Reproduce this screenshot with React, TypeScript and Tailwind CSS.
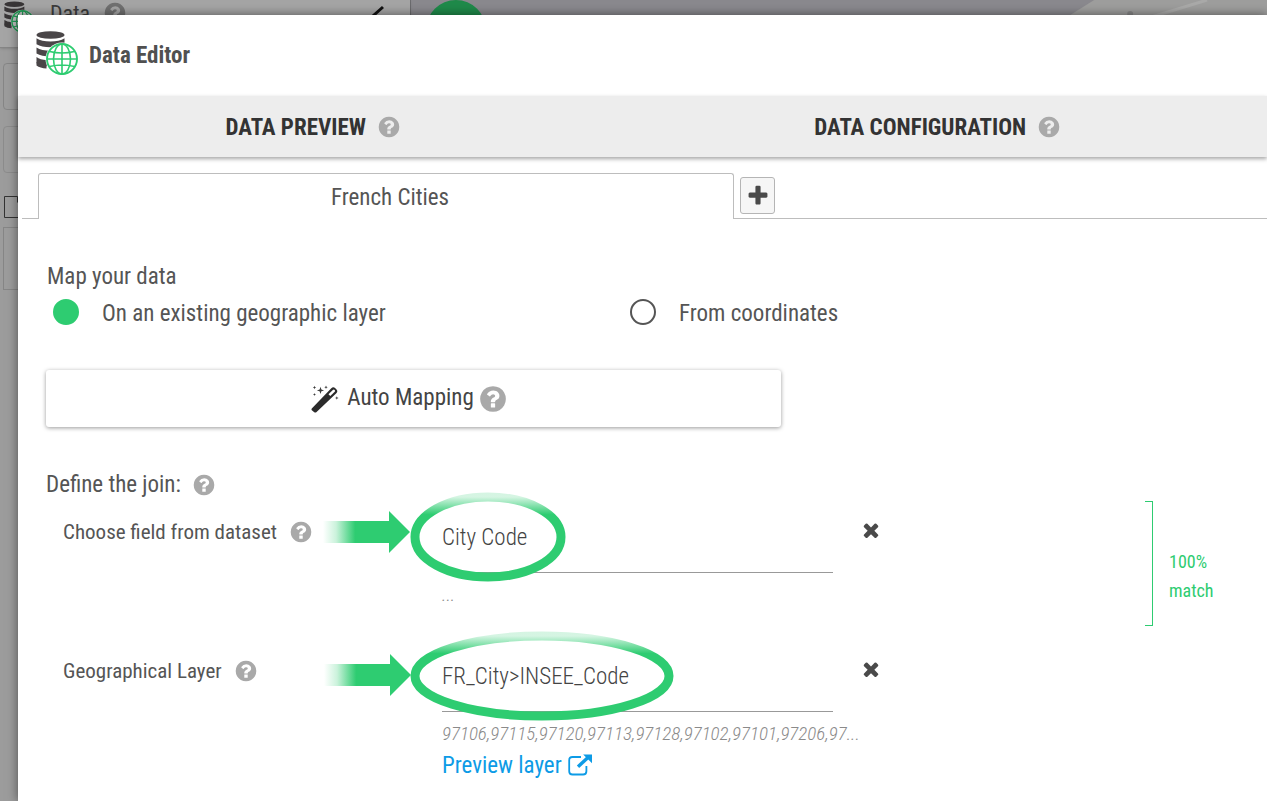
import { useId, useState } from "react";

type IconProps = { className?: string };

function HelpIcon({ className = "size-[24px]" }: IconProps) {
  return (
    <svg viewBox="0 0 1792 1792" fill="currentColor" className={className} aria-hidden="true">
      <path d="M1024 1376v-192q0-14-9-23t-23-9h-192q-14 0-23 9t-9 23v192q0 14 9 23t23 9h192q14 0 23-9t9-23zm256-672q0-88-55.5-163t-138.5-116-170-41q-243 0-371 213-15 24 8 42l132 100q7 6 19 6 16 0 25-12 53-68 86-92 34-24 86-24 48 0 85.5 26t37.5 59q0 38-20 61t-68 45q-63 28-115.5 86.5t-52.5 125.5v36q0 14 9 23t23 9h192q14 0 23-9t9-23q0-19 21.5-49.5t54.5-49.5q32-18 49-28.5t46-35 44.5-48 28-60.5 12.5-81zm384 192q0 209-103 385.5t-279.5 279.5-385.5 103-385.5-103-279.5-279.5-103-385.5 103-385.5 279.5-279.5 385.5-103 385.5 103 279.5 279.5 103 385.5z" />
    </svg>
  );
}

function PlusIcon({ className }: IconProps) {
  return (
    <svg viewBox="0 0 1792 1792" fill="currentColor" className={className} aria-hidden="true">
      <path d="M1600 736v192q0 40-28 68t-68 28h-416v416q0 40-28 68t-68 28h-192q-40 0-68-28t-28-68v-416h-416q-40 0-68-28t-28-68v-192q0-40 28-68t68-28h416v-416q0-40 28-68t68-28h192q40 0 68 28t28 68v416h416q40 0 68 28t28 68z" />
    </svg>
  );
}

function TimesIcon({ className }: IconProps) {
  return (
    <svg viewBox="0 0 1792 1792" fill="currentColor" className={className} aria-hidden="true">
      <path d="M1490 1322q0 40-28 68l-136 136q-28 28-68 28t-68-28l-294-294-294 294q-28 28-68 28t-68-28l-136-136q-28-28-28-68t28-68l294-294-294-294q-28-28-28-68t28-68l136-136q28-28 68-28t68 28l294 294 294-294q28-28 68-28t68 28l136 136q28 28 28 68t-28 68l-294 294 294 294q28 28 28 68z" />
    </svg>
  );
}

function DatabaseGlobe({ className }: IconProps) {
  return (
    <svg viewBox="0 0 42 45" className={className} aria-hidden="true">
      <g fill="#4a4648">
        <ellipse cx="14.5" cy="4" rx="14" ry="3.8" />
        <path d="M0.5 7.2q5 3.2 14 3.2t14-3.2v6q-5 3-14 3t-14-3z" />
        <path d="M0.5 16.6q5 3.2 14 3.2t14-3.2v6q-5 3-14 3t-14-3z" />
        <path d="M0.5 26q3.5 2.8 10.5 3.2v6q-7-.4-10.5-3z" />
        <path d="M0.5 31q3.5 2.8 10 3.2v3.4q-6.500-.4-10-3z" />
      </g>
      <circle cx="26" cy="28" r="16.500" fill="#fff" />
      <g fill="none" stroke="#2ecc71" strokeWidth="1.6">
        <circle cx="26" cy="28" r="15" strokeWidth="1.900" />
        <ellipse cx="26" cy="28" rx="8.500" ry="15" />
        <path d="M26 13v30M11 28h30M13.500 20.500q12.500 3 25 0M13.500 35.500q12.500-3 25 0" />
      </g>
    </svg>
  );
}

function WandIcon({ className }: IconProps) {
  return (
    <svg viewBox="0 0 28 28" className={className} aria-hidden="true">
      <path d="M0.800 23.500 20.300 3.200q2-2 4 0l1 1q2 2 0 4L5.300 27.200q-1 .8-2 0l-2.500-2q-.8-.8 0-1.700z" fill="#2b2b2b" />
      <path d="m17.500 9.300 4.300-4.400q1-.8 1.900 0 .8.900 0 1.800l-4.400 4.300z" fill="#fff" />
      <path d="m9.500 1.800.9 2.700 2.700.9-2.700.9-.9 2.700-.9-2.700-2.700-.9 2.700-.9zM3.500.800l.5 1.200 1.200.5-1.200.5-.5 1.200-.5-1.200-1.200-.5 1.200-.5zM15 .5l.5 1.200 1.200.5-1.200.5-.5 1.200-.5-1.200-1.200-.5 1.200-.5zM3.500 8l.4 1.100 1.100.4-1.100.4-.4 1.100-.4-1.100-1.100-.4 1.100-.4zM25.800 11.200l.5 1.300 1.300.5-1.300.5-.5 1.300-.5-1.300-1.300-.5 1.300-.5z" fill="#3c3c3c" />
    </svg>
  );
}

function ExternalIcon({ className }: IconProps) {
  return (
    <svg viewBox="0 0 24 22" className={className} fill="none" aria-hidden="true">
      <path d="M13 3H4.500Q1.200 3 1.200 6.300v10.900q0 3.300 3.300 3.300h10.600q3.300 0 3.300-3.300V12" stroke="currentColor" strokeWidth="1.800" />
      <path d="M10 12.700 20 3.500" stroke="currentColor" strokeWidth="3.400" />
      <path d="M15.200.5H24v8.700z" fill="currentColor" />
    </svg>
  );
}

function HelpButton({ label, className }: { label: string; className?: string }) {
  return (
    <button type="button" aria-label={label} className="flex shrink-0 text-[#a9a9a9]">
      <HelpIcon className={className} />
    </button>
  );
}

type Callout = { arrowX: number; arrowY: number; ringCx: number; ringCy: number; ringRx: number };

function CalloutMark({ arrowX, arrowY, ringCx, ringCy, ringRx }: Callout) {
  const id = useId();
  return (
    <svg
      className="pointer-events-none absolute -top-[20px] left-[260px] h-[112px] w-[360px]"
      viewBox="0 0 360 112"
      aria-hidden="true"
    >
      <defs>
        <linearGradient id={id + "a"} x1="0" x2="1" y1="0" y2="0">
          <stop offset="0" stopColor="#2ecc71" stopOpacity="0" />
          <stop offset="0.150" stopColor="#2ecc71" stopOpacity="0.250" />
          <stop offset="0.370" stopColor="#2ecc71" />
        </linearGradient>
        <linearGradient id={id + "r"} x1="0" x2="0" y1="0" y2="1">
          <stop offset="0" stopColor="#2ecc71" stopOpacity="0.200" />
          <stop offset="0.220" stopColor="#2ecc71" />
        </linearGradient>
      </defs>
      <path
        d={`M${arrowX} ${arrowY - 11}h66v-10l21 21-21 21v-10h-66z`}
        fill={`url(#${id}a)`}
      />
      <ellipse
        cx={ringCx}
        cy={ringCy}
        rx={ringRx}
        ry="40"
        fill="none"
        stroke={`url(#${id}r)`}
        strokeWidth="9"
      />
    </svg>
  );
}

function JoinRow(props: { id: string; label: string; value: string; hint: string; link?: string; callout: Callout }) {
  const [value, setValue] = useState(props.value);
  return (
    <div className="relative flex min-h-[139px]">
      <div className="flex h-[42px] w-[379px] shrink-0 items-center gap-[12px] text-[21px]">
        <label htmlFor={props.id} className="pt-[1px]">{props.label}</label>
        <HelpButton label={`Help: ${props.label}`} />
      </div>
      <div className="w-[391px] shrink-0">
        <input
          id={props.id}
          value={value}
          onChange={(e) => setValue(e.target.value)}
          className="block h-[62px] w-full border-b border-[#999999] bg-transparent pb-[8px] font-light text-[#444444] outline-none"
        />
        <p className="mt-[8px] text-[19px] leading-[28px] font-light whitespace-nowrap text-[#8a8a8a] italic">
          {props.hint}
        </p>
        {props.link && (
          <a href="#preview" className="mt-[4px] flex w-fit items-center gap-[6px] leading-[28px] text-[#0d9be6]">
            {props.link}
            <ExternalIcon className="mb-[2px] h-[22px] w-[24px]" />
          </a>
        )}
      </div>
      <button
        type="button"
        aria-label={`Clear ${props.label}`}
        onClick={() => setValue("")}
        className="ml-[26px] flex h-[38px] w-[24px] items-center justify-center text-[#4a4a4a]"
      >
        <TimesIcon className="size-[22px]" />
      </button>
      <CalloutMark {...props.callout} />
    </div>
  );
}

function Backdrop() {
  return (
    <div className="flex min-h-screen bg-[#8a898e]" aria-hidden="true">
      <div className="w-[411px] shrink-0 border-r border-[#6f6f72] bg-[#9c9c9c]">
        <div className="flex h-[48px] items-start justify-between border-b border-[#858585] bg-[#a5a5a5] pt-[1px] pr-[26px] pl-[4px] shadow">
          <div className="flex items-start">
            <DatabaseGlobe className="h-[33px] w-[30px] brightness-75" />
            <span className="ml-[16px] text-[22px] leading-[26px] text-[#3c3c3c]">Data</span>
            <HelpIcon className="ml-[13px] size-[24px] text-[#707070]" />
          </div>
          <svg viewBox="0 0 14 20" className="mt-[4px] h-[20px] w-[14px]" fill="none" stroke="#111" strokeWidth="3">
            <path d="M13 2 3 11l10 8" />
          </svg>
        </div>
        <div className="flex flex-col pl-[3px]">
          <div className="mt-[15px] h-[47px] w-[380px] rounded border border-[#868686]" />
          <div className="mt-[16px] h-[47px] w-[380px] rounded border border-[#8c8c8c]" />
          <svg viewBox="0 0 20 24" className="mt-[22px] ml-[1px] h-[24px] w-[20px]" fill="none" stroke="#333">
            <path d="M.5 1.500h13v6M.5 1.500v21h19" />
          </svg>
          <div className="mt-[8px] h-[63px] w-[380px] border border-[#868686]" />
        </div>
      </div>
      <svg viewBox="0 0 857 40" preserveAspectRatio="none" className="h-[40px] min-w-0 flex-1">
        <ellipse cx="45" cy="30" rx="30" ry="30" fill="#1f8a4a" />
        <path d="M684 0h173v40H620z" fill="#9e9e9d" />
        <path d="M797 0 725 22" stroke="#aaaaa9" strokeWidth="3" />
        <circle cx="720" cy="14" r="3" fill="#868686" />
      </svg>
    </div>
  );
}

const modes = [
  { id: "layer", label: "On an existing geographic layer", className: "w-[577px]" },
  { id: "coords", label: "From coordinates", className: "" },
];

export default function App() {
  const [mode, setMode] = useState("layer");
  return (
    <div className="relative h-screen overflow-hidden font-['Roboto_Condensed','Liberation_Sans_Narrow',sans-serif] text-[23px] text-[#555555]">
      <Backdrop />
      <div className="absolute inset-0 pt-[15px] pl-[18px]">
        <main className="min-h-full bg-white shadow-[0_0_10px_rgba(0,0,0,0.5)]">
          <header className="flex h-[81px] items-center gap-[11px] pl-[18px]">
            <DatabaseGlobe className="mb-[4px] h-[45px] w-[42px]" />
            <h1 className="pt-[2px] text-[23px] font-bold text-[#505050]">Data Editor</h1>
          </header>

          <nav className="relative grid h-[61px] grid-cols-2 bg-[#ededed] font-bold text-[#333333] shadow-[0_2px_4px_rgba(0,0,0,0.35)]">
            <div className="flex items-center justify-center gap-[11px] pr-[34px]">
              <button type="button" className="pt-[4px]">DATA PREVIEW</button>
              <HelpButton label="Help: data preview" />
            </div>
            <div className="flex items-center justify-center gap-[11px] pr-[34px]">
              <button type="button" className="pt-[4px]">DATA CONFIGURATION</button>
              <HelpButton label="Help: data configuration" />
            </div>
          </nav>

          <div className="flex pt-[16px] pl-[4px]">
            <div className="w-[16px] border-b border-[#bdbdbd]" />
            <button
              type="button"
              className="h-[46px] w-[696px] rounded-t-[3px] border border-b-0 border-[#bdbdbd] pt-[4px] pl-[8px]"
            >
              French Cities
            </button>
            <div className="flex flex-1 items-center border-b border-[#bdbdbd] pl-[6px]">
              <button
                type="button"
                aria-label="Add a dataset"
                className="flex h-[37px] w-[35px] items-center justify-center rounded-[3px] border border-[#b5b5b5] bg-[#f6f6f6] text-[#4a4a4a]"
              >
                <PlusIcon className="size-[24px]" />
              </button>
            </div>
          </div>

          <section className="px-[28px] pt-[42px]">
            <fieldset>
              <legend className="pl-[1px] leading-[32px]">Map your data</legend>
              <div className="flex pt-[4px] pl-[7px]">
                {modes.map((m) => (
                  <label key={m.id} className={`flex items-center gap-[23px] leading-[34px] ${m.className}`}>
                    <input
                      type="radio"
                      name="mode"
                      checked={mode === m.id}
                      onChange={() => setMode(m.id)}
                      className="mb-[4px] size-[26px] appearance-none rounded-full border-2 border-[#555555] checked:border-[#2ecc71] checked:bg-[#2ecc71]"
                    />
                    {m.label}
                  </label>
                ))}
              </div>
            </fieldset>

            <button
              type="button"
              className="mt-[39px] flex h-[57px] w-full max-w-[735px] items-center justify-center rounded-[3px] pr-[8px] text-[#444444] shadow-[0_1px_4px_rgba(0,0,0,0.4)]"
            >
              <WandIcon className="size-[28px]" />
              <span className="ml-[8px]">Auto Mapping</span>
              <HelpIcon className="ml-[4px] size-[30px] text-[#a9a9a9]" />
            </button>

            <div className="mt-[42px] flex items-center gap-[11px] leading-[32px]">
              <h2>Define the join:</h2>
              <HelpButton label="Help: join" />
            </div>

            <div className="flex justify-between pt-[10px] pr-[25px] pl-[17px]">
              <div>
                <JoinRow
                  id="field"
                  label="Choose field from dataset"
                  value="City Code"
                  hint="..."
                  callout={{ arrowX: 0, arrowY: 41, ringCx: 165, ringCy: 46, ringRx: 73 }}
                />
                <JoinRow
                  id="layer"
                  label="Geographical Layer"
                  value="FR_City>INSEE_Code"
                  hint="97106,97115,97120,97113,97128,97102,97101,97206,97..."
                  link="Preview layer"
                  callout={{ arrowX: 1, arrowY: 45, ringCx: 219, ringCy: 46, ringRx: 127 }}
                />
              </div>
              <div className="flex gap-[16px] text-[18px] leading-[29px] text-[#2ecc71]">
                <div className="-mt-[10px] h-[125px] w-[8px] border border-l-0 border-[#2ecc71]" />
                <p className="w-[45px] pt-[36px]">100% match</p>
              </div>
            </div>
          </section>
        </main>
      </div>
    </div>
  );
}
